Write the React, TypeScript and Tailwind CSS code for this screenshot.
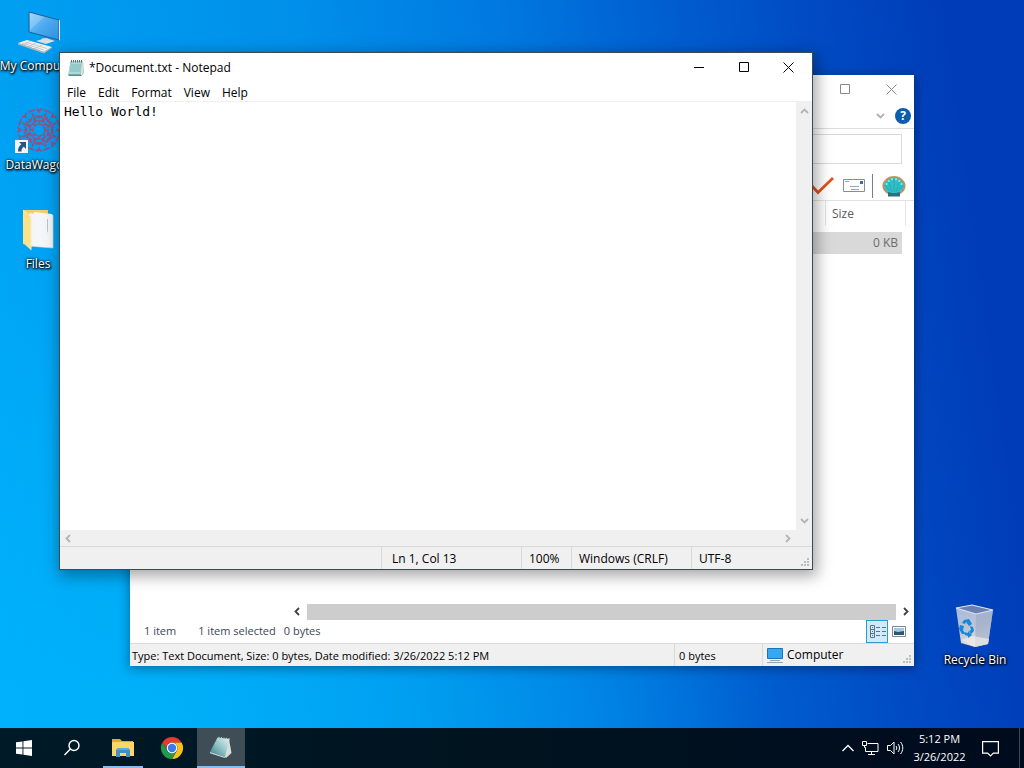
import { ReactNode, useState } from 'react';
import clsx from 'clsx';

const MENU_ITEMS = ['File', 'Edit', 'Format', 'View', 'Help'];

interface ShortcutProps {
  label: string;
  icon: ReactNode;
}

function Shortcut({ label, icon }: ShortcutProps) {
  return (
    <button className="flex w-[76px] flex-col items-center">
      <span className="flex h-12 w-12 items-center justify-center">{icon}</span>
      <span className="h-[19px] text-xs leading-[19px] whitespace-nowrap text-white [text-shadow:1px_1px_2px_#000,0_0_3px_#000,0_1px_3px_#000]">
        {label}
      </span>
    </button>
  );
}

// Desktop icons

function MyComputerIcon() {
  return (
    <svg width="48" height="48" viewBox="0 0 48 48">
      <defs>
        <linearGradient id="screen" x1="0" y1="0" x2="1" y2="1">
          <stop offset="0" stopColor="#8fd0fb" />
          <stop offset="0.5" stopColor="#4aa9ee" />
          <stop offset="1" stopColor="#2f8fe0" />
        </linearGradient>
      </defs>
      <path d="M28 30l7 1-1 4-7-1z" fill="#b9c2ca" />
      <path d="M22 33l10-3 9 3-9 3z" fill="#d9dee2" />
      <path d="M15 4l30 8v20L15 24z" fill="url(#screen)" stroke="#21618f" strokeWidth="1" />
      <path d="M45 12l1 .6V32l-1 .5z" fill="#e8eef2" />
      <path d="M16 5l14 4-14 13z" fill="#fff" opacity="0.18" />
      <path d="M4 35l9-3 25 7-8 5z" fill="#f1f1f0" />
      <path d="M4 35l26 9v1.500L4 36.500zM30 44l8-5v1l-8 5.500z" fill="#b3b6b8" />
      <path d="M8 35l22 7M11 34l22 6.500M14 39l8-4M20 41l8-4M9 37l8-4" stroke="#b8bbbd" strokeWidth="0.7" />
    </svg>
  );
}

function DataWagonIcon() {
  return (
    <span className="relative h-12 w-12">
      <svg width="48" height="48" viewBox="0 0 48 48" fill="none">
        <g stroke="#a04a78" strokeWidth="1.500" strokeDasharray="4 1.500" opacity="0.9">
          {[0, 45, 90, 135, 180, 225, 270, 315].map((deg) => (
            <g key={deg} transform={`rotate(${deg} 25 23)`}>
              <path d="M25 17V1M22 15l-5-11M28 15l5-11M17 4l6-2 2 3 2-3 6 2M21 8l4 3 4-3M20 12l5 3 5-3" />
            </g>
          ))}
          <circle cx="25" cy="23" r="6" stroke="#c2405a" />
          <circle cx="25" cy="23" r="13" />
        </g>
      </svg>
      <svg className="absolute bottom-0.5 left-px" width="13" height="13" viewBox="0 0 13 13">
        <path d="M0 0h13v13H0z" fill="#f2f6f9" />
        <path d="M4 2h7v7L8.800 6.800C7 8 6.500 9.500 6.500 11.500H3C3 8.500 4 6 6.300 4.300z" fill="#245787" />
      </svg>
    </span>
  );
}

function FilesIcon() {
  return (
    <svg width="48" height="48" viewBox="0 0 48 48">
      <path d="M9 4h25v34H9z" fill="#f2d067" />
      <path d="M15 7l24 2v33l-24-2z" fill="#f3f5f7" stroke="#d5dade" strokeWidth="0.600" />
      <path d="M20 6l18 2v33l-18-1z" fill="#f4f6f7" />
      <path d="M33 13v12l1 2V13z" fill="#b9c6cf" />
      <path d="M9 4l8 7v33l-8-7z" fill="#fde08a" />
      <path d="M9 4l8 7v33" fill="none" stroke="#f9edc0" strokeWidth="1" />
    </svg>
  );
}

function RecycleBinIcon() {
  return (
    <svg width="48" height="48" viewBox="0 0 48 48">
      <defs>
        <linearGradient id="bin" x1="0" y1="0" x2="0.400" y2="1">
          <stop offset="0" stopColor="#a9b9da" />
          <stop offset="0.600" stopColor="#bcc6d8" />
          <stop offset="1" stopColor="#e6e3de" />
        </linearGradient>
      </defs>
      <path d="M5 6l20 6 17-4-5 34-13 3-14-4z" fill="url(#bin)" />
      <path d="M25 12l17-4-5 34-13 3z" fill="#9aa9c6" opacity="0.600" />
      <path d="M5 6l16-3 21 5-17 4z" fill="#6b7fb0" stroke="#dfe6f2" strokeWidth="1.200" />
      <path d="M10 38l12-4 16 3-1 5-13 3z" fill="#f1eee8" opacity="0.650" />
      <g fill="#1687d9">
        <path d="M13 18l5-1 3 5-3 2-3-4-1 2-3-1z" />
        <path d="M9 23l4 1-1 4 2 4-3 0-3-5z" />
        <path d="M13 30l4 1v-2l4 4-4 3v-2l-3-1z" />
        <path d="M19 24l3 1 1 4-3 3-2-3 2-1z" />
      </g>
    </svg>
  );
}

// Window icons

function NotepadIcon() {
  return (
    <svg width="18" height="18" viewBox="0 0 18 18">
      <path d="M3.500 2.500h12l1 11.500-2 3H1.500z" fill="#7fb9b6" />
      <path d="M3.500 2.500h11l-1 13H1z" fill="#a9dcd8" />
      <path d="M3.500 6h10.500M3.200 8h10.500M3 10h10.500M2.700 12h10.500" stroke="#73aeb0" strokeWidth="0.800" />
      <path d="M14.500 2.500l1.500.5.5 11-2 2.500-1-1z" fill="#d9e7e3" stroke="#90a8a4" strokeWidth="0.400" />
      <path d="M1 15.500h12.500l1 1.500H2z" fill="#5a8d8d" />
      <path d="M4.500 1v2.500M6.500 1v2.500M8.500 1v2.500M10.500 1v2.500M12.500 1v2.500M14.500 1v2.500" stroke="#4d6068" strokeWidth="0.900" />
    </svg>
  );
}

function MinimizeIcon() {
  return (
    <svg width="10" height="10" viewBox="0 0 10 10" stroke="currentColor">
      <path d="M0 5.500h10" />
    </svg>
  );
}

function MaximizeIcon() {
  return (
    <svg width="10" height="10" viewBox="0 0 10 10" fill="none" stroke="currentColor">
      <path d="M.5.5h9v9h-9z" />
    </svg>
  );
}

function CloseIcon() {
  return (
    <svg width="11" height="11" viewBox="0 0 11 11" stroke="currentColor">
      <path d="M.5.5l10 10M10.500.5l-10 10" />
    </svg>
  );
}

function Arrow({ direction }: { direction: 'up' | 'down' | 'left' | 'right' }) {
  const paths = {
    up: 'M1 6l3.500-3.500L8 6',
    down: 'M1 3l3.500 3.500L8 3',
    left: 'M6 1L2.500 4.500 6 8',
    right: 'M3 1l3.500 3.500L3 8',
  };
  return (
    <svg width="9" height="9" viewBox="0 0 9 9" fill="none" stroke="currentColor" strokeWidth="1.800">
      <path d={paths[direction]} />
    </svg>
  );
}

function ResizeGrip() {
  return (
    <svg className="shrink-0 self-end" width="12" height="12" viewBox="0 0 12 12" fill="#bdbdbd">
      <path d="M7 1h2v2H7zM4 4h2v2H4zM7 4h2v2H7zM1 7h2v2H1zM4 7h2v2H4zM7 7h2v2H7z" />
    </svg>
  );
}

function NotepadWindow() {
  const [text, setText] = useState('Hello World!');

  return (
    <section className="absolute top-[52px] right-[211px] bottom-[158px] left-[59px] flex flex-col border border-[#3c4a52] bg-white shadow-[2px_4px_14px_2px_rgba(0,0,0,0.350)]">
      <header className="flex shrink-0 pr-px">
        <div className="flex h-[30px] flex-1 items-center gap-1 pl-[7px]">
          <NotepadIcon />
          <h1 className="text-xs">*Document.txt - Notepad</h1>
        </div>
        <button aria-label="Minimize" className="flex h-7 w-[45px] items-center justify-center">
          <MinimizeIcon />
        </button>
        <button aria-label="Maximize" className="flex h-7 w-[45px] items-center justify-center">
          <MaximizeIcon />
        </button>
        <button aria-label="Close" className="flex h-7 w-[45px] items-center justify-center">
          <CloseIcon />
        </button>
      </header>

      <nav className="flex h-[19px] shrink-0 items-center border-b border-[#f0f0f0] pt-0.5 pl-px">
        {MENU_ITEMS.map((item) => (
          <button key={item} className="px-[6px] text-xs leading-4">
            {item}
          </button>
        ))}
      </nav>

      <div className="flex min-h-0 flex-1">
        <textarea
          aria-label="Document text"
          value={text}
          onChange={(e) => setText(e.target.value)}
          className="flex-1 resize-none overflow-hidden px-1 py-0.5 font-['DejaVu_Sans_Mono',monospace] text-[13px] leading-4 outline-none"
        />
        <div className="flex w-4 flex-col items-center justify-between bg-[#f0f0f0] py-[5px] text-[#b4b4b4]">
          <Arrow direction="up" />
          <Arrow direction="down" />
        </div>
      </div>
      <div className="flex h-4 shrink-0 items-center justify-between bg-[#f0f0f0] pr-5 pl-1 text-[#b4b4b4]">
        <Arrow direction="left" />
        <Arrow direction="right" />
      </div>

      <footer className="flex h-[23px] shrink-0 border-t border-[#d9d9d9] bg-[#f0f0f0] text-xs leading-6">
        <span className="flex-1" />
        <span className="w-[140px] border-l border-[#d9d9d9] pl-[10px]">Ln 1, Col 13</span>
        <span className="w-[50px] border-l border-[#d9d9d9] pl-[7px]">100%</span>
        <span className="w-[120px] border-l border-[#d9d9d9] pl-[7px]">Windows (CRLF)</span>
        <span className="flex w-[121px] justify-between border-l border-[#d9d9d9] pl-[7px]">
          UTF-8
          <ResizeGrip />
        </span>
      </footer>
    </section>
  );
}

function ExplorerWindow() {
  return (
    <section className="absolute top-[75px] right-[110px] bottom-[62px] left-[130px] flex flex-col bg-white shadow-[0_2px_10px_1px_rgba(0,0,0,0.350)]">
      <header className="flex h-7 shrink-0 items-center justify-end text-[#8a8a8a]">
        <button aria-label="Maximize" className="flex h-7 w-[46px] items-center justify-center">
          <MaximizeIcon />
        </button>
        <button aria-label="Close" className="flex h-7 w-[46px] items-center justify-center">
          <CloseIcon />
        </button>
      </header>

      <div className="flex h-[26px] shrink-0 items-center justify-end gap-[10px] border-b border-[#dcdcdc] pr-[3px]">
        <button aria-label="Expand the ribbon" className="text-[#b0b0b0]">
          <Arrow direction="down" />
        </button>
        <button aria-label="Help" className="h-4 w-4 rounded-full bg-[#0c5db0] text-xs leading-4 font-bold text-white">
          ?
        </button>
      </div>

      <div className="flex shrink-0 justify-end pt-[5px] pr-3">
        <input aria-label="Search" className="h-[30px] w-[200px] border border-[#d9d9d9] outline-none" />
      </div>

      <div className="flex h-[37px] shrink-0 items-center justify-end border-b border-[#e2e2e2] pt-2 pr-[7px]">
        <button aria-label="Select">
          <svg width="26" height="20" viewBox="0 0 26 20" fill="none">
            <path d="M2 9l7 7.500L24 2" stroke="#e2501c" strokeWidth="2.800" />
          </svg>
        </button>
        <button aria-label="Mail" className="ml-2">
          <svg width="22" height="14" viewBox="0 0 22 14" fill="none">
            <path d="M.5.5h21v12H.5z" fill="#fdfdfd" stroke="#7f8fa0" />
            <path d="M2 2.500h4M7 7.500h9M8 10.500h8" stroke="#98a6b4" />
            <path d="M17 2h3v3h-3z" fill="#2f6db3" />
          </svg>
        </button>
        <span className="mr-2 ml-[7px] h-6 w-px bg-[#7d7d7d]" />
        <button aria-label="Classic Shell">
          <svg width="26" height="22" viewBox="0 0 26 22">
            <path d="M7 19C1 16-.5 9 4 5 8-.5 18-.5 22 5c4.500 4 3 11-3 14z" fill="#c98f5e" />
            <path d="M8 18C3 15 1.500 9 5.500 6 9 1.500 17 1.500 20.500 6c4 3 2.500 9-2.500 12z" fill="#2fc0c6" />
            <path d="M13 17V4M11 17L7.500 6M15 17l3.500-11M9 16l-5-6M17 16l5-6" stroke="#1f9fb4" strokeWidth="0.700" />
            <g fill="#a5eae4">
              <circle cx="5.500" cy="9" r="1" />
              <circle cx="7.800" cy="6" r="1" />
              <circle cx="11" cy="4.200" r="1" />
              <circle cx="15" cy="4.200" r="1" />
              <circle cx="18.200" cy="6" r="1" />
              <circle cx="20.500" cy="9" r="1" />
            </g>
            <path d="M7 17c4 1.500 8 1.500 12 0v4.500H7z" fill="#2b6d86" />
          </svg>
        </button>
      </div>

      <div className="flex-1 pr-2">
        <table className="w-full table-fixed border-separate border-spacing-0 text-xs text-[#5c5c5c]">
          <thead>
            <tr className="h-[25px]">
              <th aria-label="Name" className="border-r border-[#e5e5e5]" />
              <th className="w-[80px] border-r border-[#e5e5e5] pl-[6px] text-left font-normal">Size</th>
            </tr>
          </thead>
          <tbody className="before:block before:h-[6px] before:content-['']">
            <tr className="h-[22px]">
              <td className="bg-[#d9d9d9]" />
              <td className="border-r-4 border-white bg-[#d9d9d9] pr-1 text-right text-[#6d6d6d]">0 KB</td>
            </tr>
          </tbody>
        </table>
      </div>

      <div className="flex h-[17px] shrink-0 items-center gap-[5px] pr-1 pl-[163px] text-[#404040]">
        <Arrow direction="left" />
        <span className="h-4 flex-1 bg-[#cdcdcd]" />
        <Arrow direction="right" />
      </div>

      <div className="flex h-[23px] shrink-0 items-center pr-2 pl-[14px] text-[11px] text-[#3b4657]">
        <span>1 item</span>
        <span className="ml-[22px]">1 item selected</span>
        <span className="ml-2">0 bytes</span>
        <button aria-label="Details view" className="ml-auto flex h-[23px] w-[22px] items-center justify-center border border-[#2f9bc9] bg-[#cfeafa]">
          <svg width="17" height="13" viewBox="0 0 17 13" fill="none" stroke="#5a7384">
            <path d="M1.500.5h4v12h-4zM1.500 4.500h4M1.500 8.500h4M7 2.500h4M7 6.500h4M7 10.500h4M13 2.500h4M13 6.500h4M13 10.500h4" />
            <path d="M3 2.500h1M3 6.500h1M3 10.500h1" />
          </svg>
        </button>
        <button aria-label="Thumbnail view" className="ml-1">
          <svg width="14" height="11" viewBox="0 0 14 11">
            <path d="M.5.5h13v10H.5z" fill="#fff" stroke="#7e8790" />
            <path d="M2 2h10v7H2z" fill="#9ecbe8" />
            <path d="M2 5l4 1 6-1v4H2z" fill="#31536e" />
          </svg>
        </button>
      </div>

      <footer className="flex h-[23px] shrink-0 border-t border-[#dadada] bg-[#f0f0f0] text-[11px] leading-6">
        <span className="flex-1 truncate pl-0.5">Type: Text Document, Size: 0 bytes, Date modified: 3/26/2022 5:12 PM</span>
        <span className="w-[88px] border-l border-[#d9d9d9] pl-1">0 bytes</span>
        <span className="flex w-[152px] items-center gap-1 border-l border-[#d9d9d9] pl-1">
          <svg width="16" height="16" viewBox="0 0 16 16">
            <path d="M.5 1.500h15v10H.5z" fill="#35a8f5" stroke="#2273ab" />
            <path d="M3 13.500h10M0 15.500h16" stroke="#8fa3b3" />
          </svg>
          <span className="flex-1 text-xs leading-6">Computer</span>
          <ResizeGrip />
        </span>
      </footer>
    </section>
  );
}

// Taskbar

interface TaskButtonProps {
  label: string;
  children: ReactNode;
  running?: boolean;
  active?: boolean;
}

function TaskButton({ label, children, running, active }: TaskButtonProps) {
  return (
    <button
      aria-label={label}
      className={clsx('flex h-10 w-12 flex-col items-center', active && 'bg-[#3f4d57]')}
    >
      <span className="flex flex-1 items-center">{children}</span>
      {(running || active) && <span className={clsx('-mt-0.5 h-0.5 bg-[#85bdf0]', active ? 'w-12' : 'w-10')} />}
    </button>
  );
}

function Taskbar() {
  return (
    <footer className="flex h-10 shrink-0 bg-linear-to-r from-[#001a28] via-[#00131f] to-[#000b1e] text-white">
      <div className="flex">
        <TaskButton label="Start">
          <svg width="16" height="16" viewBox="0 0 16 16" fill="#fff">
            <path d="M0 2.300l6.500-.9v6.200H0zM7.400 1.300L16 0v7.600H7.400zM0 8.400h6.500v6.200L0 13.700zM7.400 8.400H16V16l-8.600-1.200z" />
          </svg>
        </TaskButton>
        <TaskButton label="Search">
          <svg width="18" height="18" viewBox="0 0 18 18" fill="none" stroke="#fff" strokeWidth="1.400">
            <circle cx="11" cy="6.500" r="5" />
            <path d="M7.400 10L1.500 16" />
          </svg>
        </TaskButton>
      </div>
      <div className="ml-[3px] flex gap-px">
        <TaskButton label="File Explorer" running>
          <svg width="22" height="20" viewBox="0 0 22 20">
            <path d="M0 1h8l2 2h11v15H0z" fill="#e3a92c" />
            <path d="M0 4h22v14H0z" fill="#fbd768" />
            <path d="M4 19v-7l2-2h10l2 2v7h-4v-4H8v4z" fill="#3f8fca" />
            <path d="M4 12l2-2h10l2 2z" fill="#5fa9dc" />
          </svg>
        </TaskButton>
        <TaskButton label="Chrome">
          <svg width="22" height="22" viewBox="0 0 22 22">
            <path d="M1.470 5.500A11 11 0 0 1 20.530 5.500H11A5.500 5.500 0 0 0 6.240 13.750z" fill="#e33b2e" />
            <path d="M20.530 5.500A11 11 0 0 1 11 22l4.760-8.250A5.500 5.500 0 0 0 11 5.500z" fill="#fbc116" />
            <path d="M11 22A11 11 0 0 1 1.470 5.500l4.770 8.250a5.500 5.500 0 0 0 9.520 0z" fill="#229a4b" />
            <circle cx="11" cy="11" r="5.400" fill="#fff" />
            <circle cx="11" cy="11" r="4.200" fill="#3b7de8" />
          </svg>
        </TaskButton>
        <TaskButton label="Notepad" active>
          <svg width="24" height="24" viewBox="0 0 24 24">
            <defs>
              <linearGradient id="pad" x1="1" y1="0" x2="0" y2="1">
                <stop offset="0" stopColor="#e3f4f3" />
                <stop offset="0.500" stopColor="#8fc2c6" />
                <stop offset="1" stopColor="#2c7f86" />
              </linearGradient>
            </defs>
            <path d="M20 3l2.500 14-5.500 5-2-2z" fill="#d8dfd6" />
            <path d="M8.500 1.500l12 1.500-4.500 18L1 16z" fill="url(#pad)" />
            <path d="M1 16l15 5-.3 1L1 17.200z" fill="#cfe0df" />
            <path d="M10 .8v1.600M12.500 1v1.800M15 1.500v1.600M17.500 1.800v1.600M20 2v1.800" stroke="#b9c8c9" />
          </svg>
        </TaskButton>
      </div>

      <div className="ml-auto flex items-center">
        <button aria-label="Show hidden icons" className="mr-2">
          <svg width="12" height="8" viewBox="0 0 12 8" fill="none" stroke="#fff" strokeWidth="1.300">
            <path d="M.5 7L6 1.500 11.500 7" />
          </svg>
        </button>
        <button aria-label="Network" className="mr-2">
          <svg width="17" height="14" viewBox="0 0 17 14" fill="none" stroke="#fff">
            <path d="M5.500 2.500h10.500v8H3.500V6.500M9.500 10.500v3M6 13.500h7M.5.500h4v4h-4zM2.500 4.500v2h1" />
          </svg>
        </button>
        <button aria-label="Volume" className="mr-[9px]">
          <svg width="17" height="14" viewBox="0 0 17 14" fill="none" stroke="#fff">
            <path d="M.5 4.500h3l3.500-3.500v12L3.500 9.500h-3zM9 5c1 1 1 3 0 4M11 3c2 2.500 2 5.500 0 8M13.500 1c3 3.500 3 8.500 0 12" />
          </svg>
        </button>
        <button className="w-[53px] text-center text-[11px] leading-[18px] whitespace-nowrap">
          <span className="block">5:12 PM</span>
          <span className="block">3/26/2022</span>
        </button>
        <button aria-label="Notifications" className="mr-5 ml-4">
          <svg width="17" height="17" viewBox="0 0 17 17" fill="none" stroke="#fff" strokeWidth="1.200">
            <path d="M.6 1.600h15.800v11.500h-5L8.500 16l-2.900-2.900h-5z" />
          </svg>
        </button>
        <button aria-label="Show desktop" className="h-10 w-[5px] border-l border-[#3d4a5c]" />
      </div>
    </footer>
  );
}

export default function App() {
  return (
    <div className="flex h-screen min-h-[480px] cursor-default flex-col overflow-hidden bg-[radial-gradient(ellipse_60%_85%_at_15%_95%,rgba(0,190,255,0.600),transparent),linear-gradient(82deg,#00a6f8_0%,#009ff2_10%,#0090ea_35%,#0078e0_54%,#0062d2_66%,#004cc4_80%,#003cb8_93%)] font-['Open_Sans','Noto_Sans',sans-serif] text-black">
      <main className="relative flex-1">
        <div className="flex flex-col gap-8 pt-2">
          <Shortcut label="My Computer" icon={<MyComputerIcon />} />
          <Shortcut label="DataWagon" icon={<DataWagonIcon />} />
          <Shortcut label="Files" icon={<FilesIcon />} />
        </div>
        <div className="absolute right-[11px] bottom-[59px]">
          <Shortcut label="Recycle Bin" icon={<RecycleBinIcon />} />
        </div>
        <ExplorerWindow />
        <NotepadWindow />
      </main>
      <Taskbar />
    </div>
  );
}
